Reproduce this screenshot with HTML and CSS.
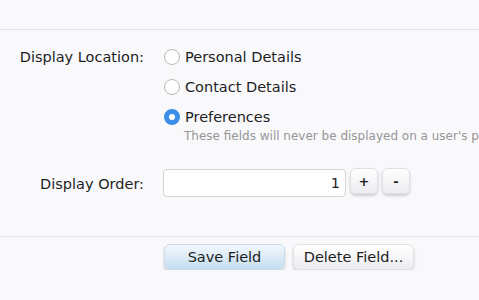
FILE: index.html
```html
<!DOCTYPE html>
<html lang="en">
  <head>
    <meta charset="UTF-8" />
    <title>Edit Field</title>
    <link rel="stylesheet" href="styles.css">
  </head>
  <body>
    <form class="field-form">
      <div class="section">
        <dl class="ctrl-unit">
          <dt>Display Location:</dt>
          <dd>
            <ul class="radio-list">
              <li><label><span class="radio"></span>Personal Details</label></li>
              <li><label><span class="radio"></span>Contact Details</label></li>
              <li>
                <label><span class="radio checked"></span>Preferences</label>
                <p class="explain">These fields will never be displayed on a user's profile.</p>
              </li>
            </ul>
          </dd>
        </dl>

        <dl class="ctrl-unit order-unit">
          <dt>Display Order:</dt>
          <dd class="spin">
            <input type="text" class="text-ctrl" value="1" />
            <button type="button" class="button small">+</button>
            <button type="button" class="button small">-</button>
          </dd>
        </dl>
      </div>

      <div class="submit-unit">
        <button type="submit" class="button primary">Save Field</button>
        <button type="button" class="button">Delete Field...</button>
      </div>
    </form>
  </body>
</html>
```

FILE: styles.css
```css
body {
  margin: 0;
  background: #f9f9fc;
  font-family: "DejaVu Sans", Verdana, sans-serif;
  font-size: 14.5px;
  color: #1e1e1e;
  overflow: hidden;
}

.field-form {
  padding-top: 29px;
}

.section {
  border-top: 1px solid #dbe7ee;
  border-bottom: 1px solid #dbe7ee;
  padding: 18px 0 39px;
}

.ctrl-unit {
  display: flex;
  margin: 0;
}

.ctrl-unit dt {
  width: 144px;
  text-align: right;
  padding-top: 1px;
  flex-shrink: 0;
}

.ctrl-unit dd {
  margin: 0 0 0 20px;
  flex: 1;
  white-space: nowrap;
}

.radio-list {
  list-style: none;
  margin: 0;
  padding: 0;
}

.radio-list li {
  margin-bottom: 12px;
}

.radio-list label {
  display: flex;
  align-items: center;
  gap: 5px;
  height: 18px;
}

.radio {
  width: 16px;
  height: 16px;
  border-radius: 50%;
  border: 1px solid #b9b9b9;
  background: #fff;
  box-sizing: border-box;
  display: inline-block;
}

.radio.checked {
  border: 5px solid #3d8ee8;
  background: #fff;
}

.explain {
  margin: 3px 0 0 20px;
  font-size: 12px;
  color: #969696;
}

.order-unit {
  margin-top: 13px;
}

.order-unit dt {
  padding-top: 8px;
}

.spin {
  display: flex;
  align-items: flex-start;
  gap: 4px;
}

.text-ctrl {
  width: 183px;
  height: 28px;
  box-sizing: border-box;
  margin: 1px 0 0 -1px;
  padding: 3px 5px;
  border: 1px solid #d3d3d3;
  border-radius: 4px;
  background: #fff;
  font: inherit;
  text-align: right;
  color: #1e1e1e;
}

.button {
  font: inherit;
  color: #1e1e1e;
  border: 1px solid #e2e2e6;
  border-radius: 6px;
  background: linear-gradient(#ffffff, #ececf1);
  box-shadow: 0 2px 3px rgba(0, 0, 0, 0.18);
  padding: 0 10px;
  height: 26px;
  white-space: nowrap;
  cursor: pointer;
}

.button.small {
  width: 28px;
  padding: 0;
  font-weight: bold;
  font-size: 13px;
}

.button.primary {
  background: linear-gradient(#f2f8fd, #c5ddef);
  border-color: #c9dcec;
}

.submit-unit {
  display: flex;
  gap: 8px;
  padding: 7px 0 0 164px;
}

.submit-unit .button {
  width: 121px;
  height: 26px;
  padding: 0;
}
```
